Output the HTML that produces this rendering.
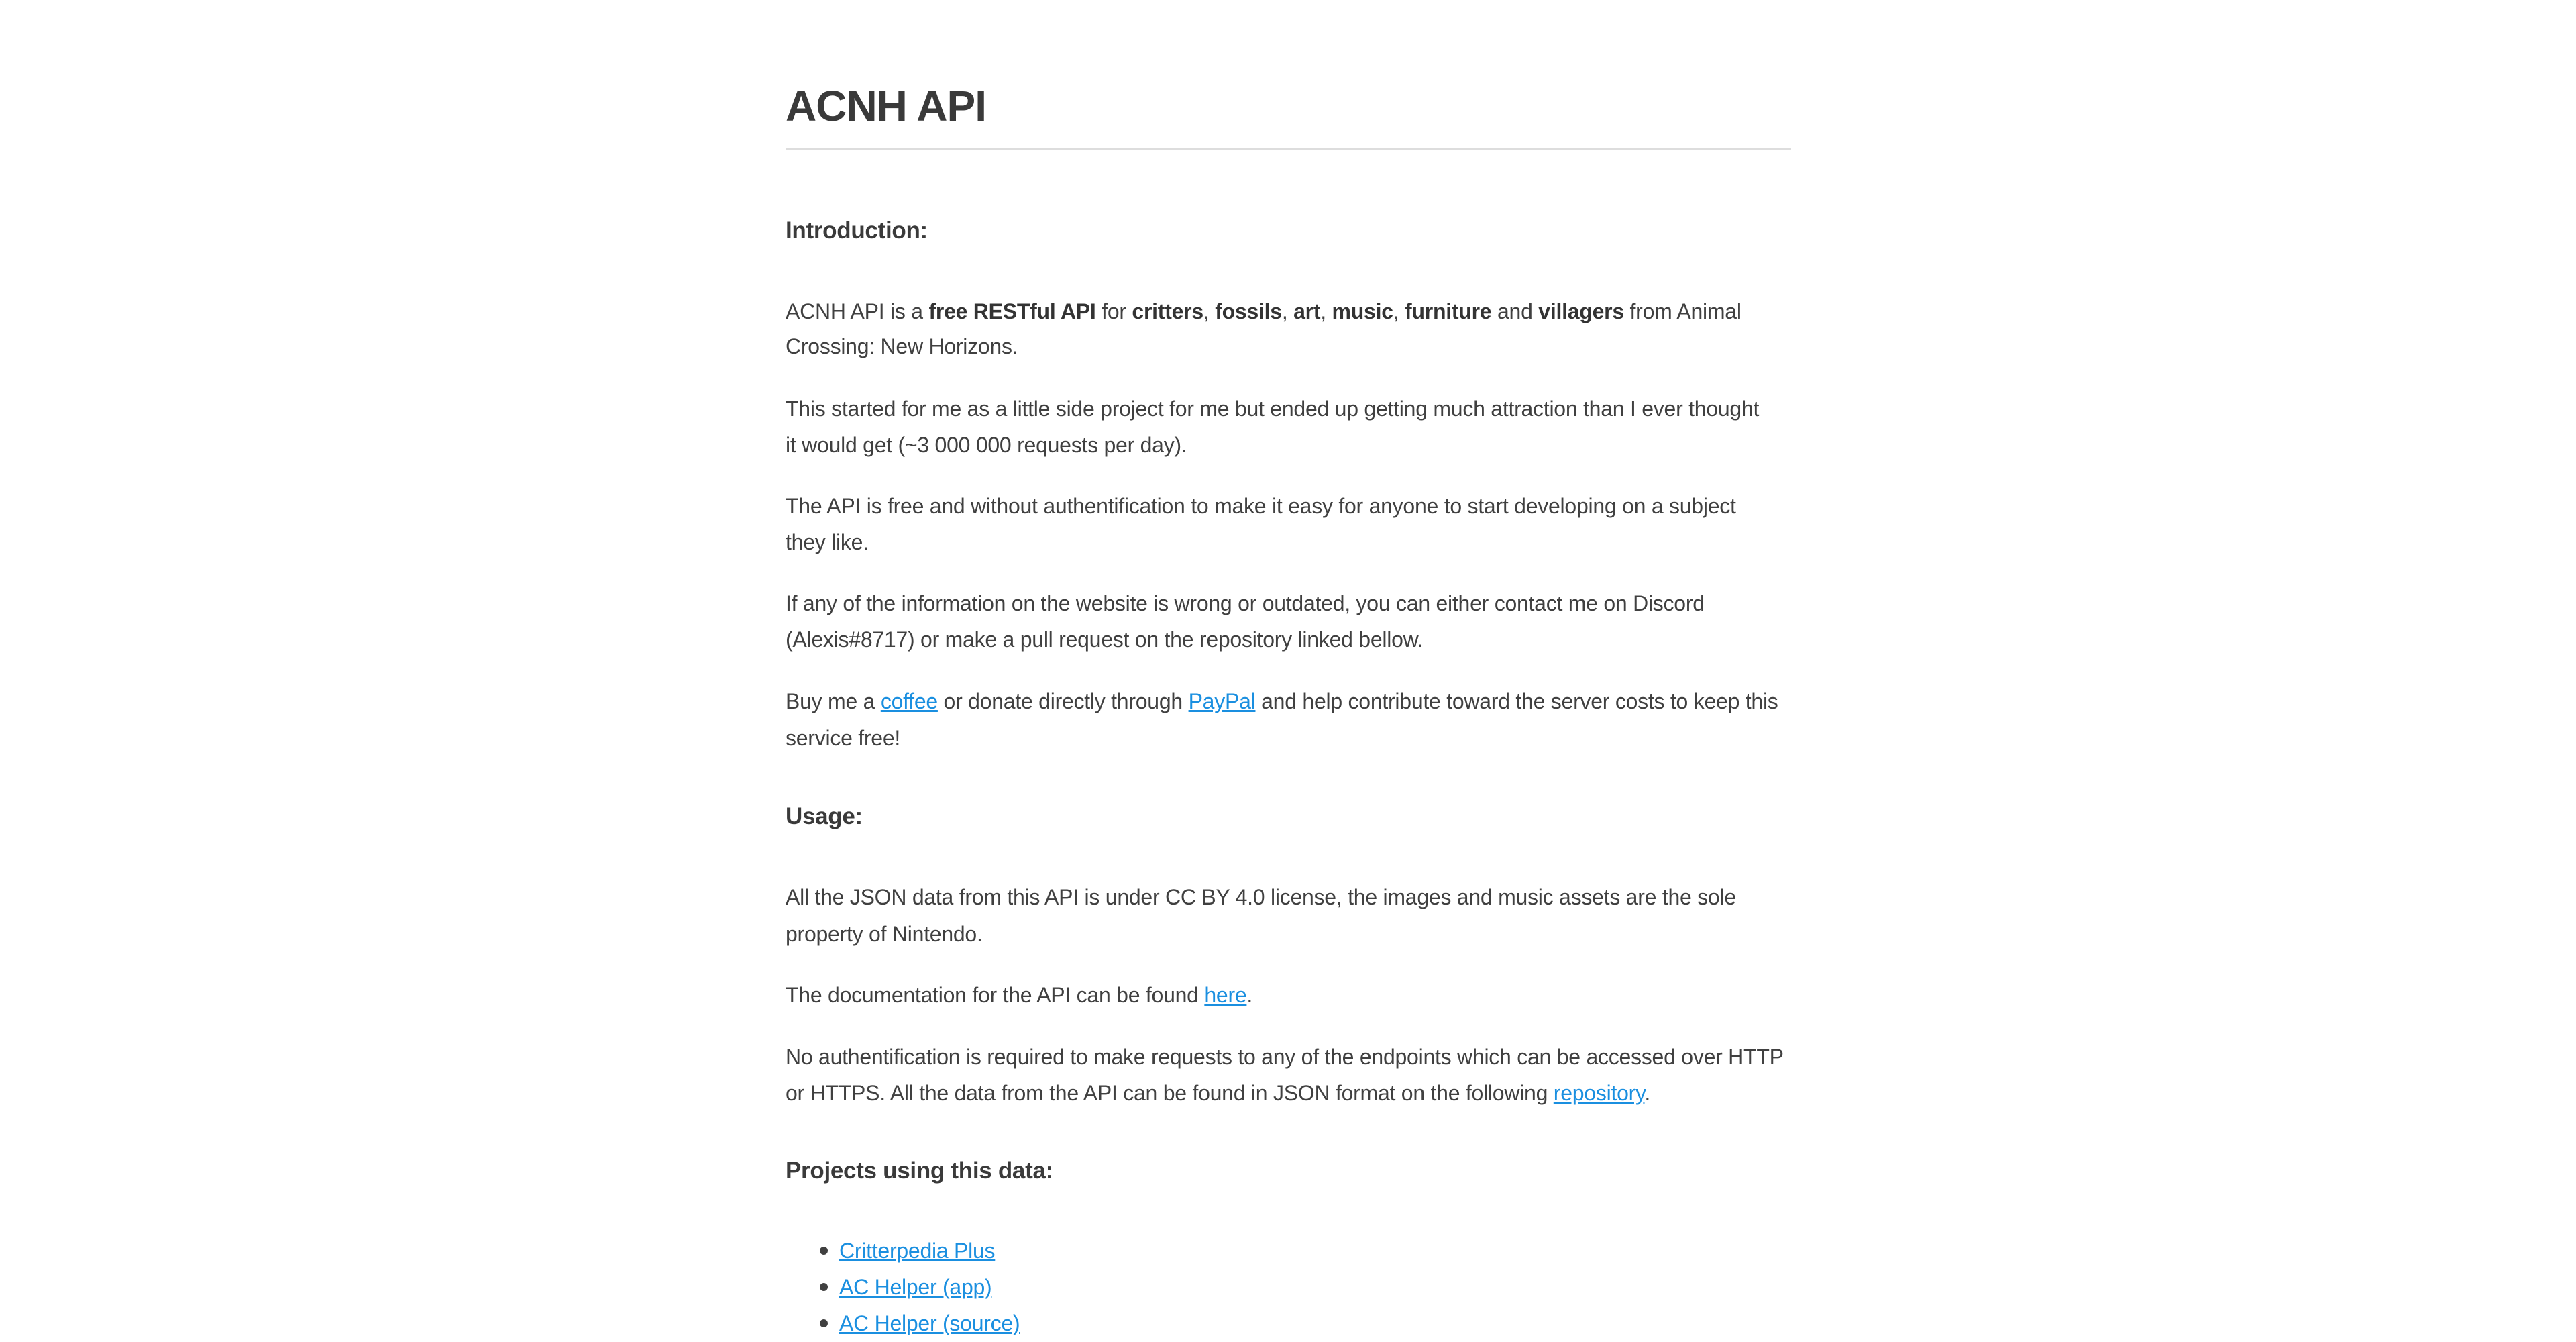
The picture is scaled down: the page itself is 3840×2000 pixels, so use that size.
<!DOCTYPE html>
<html><head><meta charset="utf-8"><style>
html,body{margin:0;padding:0;background:#fff;width:3840px;height:2000px;overflow:hidden}
body{font-family:"Liberation Sans",sans-serif;color:#404040;position:relative}
.l{position:absolute;left:1171px;white-space:nowrap;font-size:32px;line-height:54px;height:54px;letter-spacing:-0.25px}
.h{position:absolute;left:1171px;white-space:nowrap;font-weight:bold;font-size:35px;line-height:54px;letter-spacing:-0.3px;color:#3a3a3a}
b{font-weight:bold;color:#333}
a{color:#1a8fe0;text-decoration:underline}
.hr{position:absolute;left:1171px;width:1499px;top:220px;height:3px;background:#ddd}
.dot{position:absolute;left:1222px;width:12px;height:12px;border-radius:50%;background:#404040}
</style></head><body>
<div class="h" style="top:113px;font-size:64px;line-height:90px;letter-spacing:-1px">ACNH API</div>
<div class="hr"></div>
<div class="h" style="top:317px">Introduction:</div>
<div class="l" style="top:437px">ACNH API is a <b>free RESTful API</b> for <b>critters</b>, <b>fossils</b>, <b>art</b>, <b>music</b>, <b>furniture</b> and <b>villagers</b> from Animal</div>
<div class="l" style="top:489px">Crossing: New Horizons.</div>
<div class="l" style="top:582px">This started for me as a little side project for me but ended up getting much attraction than I ever thought</div>
<div class="l" style="top:636px">it would get (~3 000 000 requests per day).</div>
<div class="l" style="top:727px">The API is free and without authentification to make it easy for anyone to start developing on a subject</div>
<div class="l" style="top:781px">they like.</div>
<div class="l" style="top:872px">If any of the information on the website is wrong or outdated, you can either contact me on Discord</div>
<div class="l" style="top:926px">(Alexis#8717) or make a pull request on the repository linked bellow.</div>
<div class="l" style="top:1018px">Buy me a <a>coffee</a> or donate directly through <a>PayPal</a> and help contribute toward the server costs to keep this</div>
<div class="l" style="top:1073px">service free!</div>
<div class="h" style="top:1190px">Usage:</div>
<div class="l" style="top:1310px">All the JSON data from this API is under CC BY 4.0 license, the images and music assets are the sole</div>
<div class="l" style="top:1365px">property of Nintendo.</div>
<div class="l" style="top:1456px">The documentation for the API can be found <a>here</a>.</div>
<div class="l" style="top:1548px">No authentification is required to make requests to any of the endpoints which can be accessed over HTTP</div>
<div class="l" style="top:1602px">or HTTPS. All the data from the API can be found in JSON format on the following <a>repository</a>.</div>
<div class="h" style="top:1718px">Projects using this data:</div>
<div class="dot" style="top:1858px"></div>
<div class="l" style="top:1837px;left:1251px"><a>Critterpedia Plus</a></div>
<div class="dot" style="top:1912px"></div>
<div class="l" style="top:1891px;left:1251px"><a>AC Helper (app)</a></div>
<div class="dot" style="top:1966px"></div>
<div class="l" style="top:1945px;left:1251px"><a>AC Helper (source)</a></div>
</body></html>
